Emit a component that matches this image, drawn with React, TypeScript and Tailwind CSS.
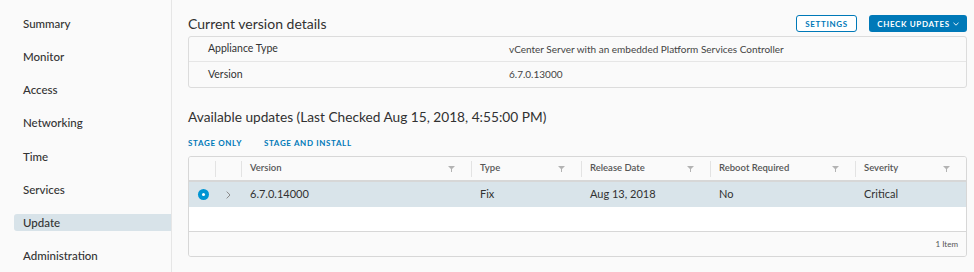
import React from "react";

const NAV = ["Summary", "Monitor", "Access", "Networking", "Time", "Services", "Update", "Administration"];

const COLS = [
  { key: "version", label: "Version" },
  { key: "type", label: "Type" },
  { key: "date", label: "Release Date" },
  { key: "reboot", label: "Reboot Required" },
  { key: "severity", label: "Severity" },
];

const ROW = { version: "6.7.0.14000", type: "Fix", date: "Aug 13, 2018", reboot: "No", severity: "Critical" } as Record<string, string>;

function Funnel() {
  return (
    <svg width="7" height="6" viewBox="0 0 7 6" className="shrink-0">
      <path d="M0 0h7L4 3v3H3V3z" fill="#b3b3b3" />
    </svg>
  );
}

export default function App() {
  return (
    <div className="w-[974px] h-[272px] flex bg-[#fafafa] text-[#313131] overflow-hidden" style={{ fontFamily: "Lato, 'Open Sans', sans-serif" }}>
      {/* Sidebar */}
      <aside className="w-[172px] shrink-0 border-r border-[#e6e6e6] pl-[14px] pt-[15px] flex flex-col gap-[16.2px]">
        {NAV.map((item) => (
          <div
            key={item}
            className={`h-[17px] flex items-center pl-[9px] text-[11.5px] font-medium text-[#333] ${item === "Update" ? "bg-[#d8e3e9] rounded-l-[3px]" : ""}`}
          >
            {item}
          </div>
        ))}
      </aside>

      {/* Main */}
      <main className="flex-1 pl-[16px] pr-[7px] pt-[15px]">
        <div className="flex items-center justify-between h-[17px]">
          <h2 className="text-[14px] text-[#313131]">Current version details</h2>
          <div className="flex items-center gap-[12px]">
            <button className="h-[17px] w-[61px] border border-[#0079b8] bg-white rounded-[3px] text-[8px] font-bold tracking-[0.08em] text-[#0079b8]">
              SETTINGS
            </button>
            <button className="h-[17px] w-[98px] bg-[#0079b8] rounded-[3px] text-[8px] font-bold tracking-[0.08em] text-white flex items-center justify-center gap-[3px]">
              CHECK UPDATES
              <svg width="6" height="4" viewBox="0 0 6 4">
                <path d="M0.5 0.8L3 3.2L5.5 0.8" stroke="white" strokeWidth="0.9" fill="none" />
              </svg>
            </button>
          </div>
        </div>

        <div className="mt-[4px] border border-[#dcdcdc] rounded-[3px] text-[10.5px]">
          <div className="h-[25px] grid grid-cols-[320px_1fr] items-center border-b border-[#e6e6e6]">
            <span className="pl-[19px] text-[#333]">Appliance Type</span>
            <span className="text-[10px] text-[#444]">vCenter Server with an embedded Platform Services Controller</span>
          </div>
          <div className="h-[25px] grid grid-cols-[320px_1fr] items-center">
            <span className="pl-[19px] text-[#333]">Version</span>
            <span className="text-[10px] text-[#444]">6.7.0.13000</span>
          </div>
        </div>

        <h2 className="mt-[20px] text-[13.7px] leading-[17px] text-[#313131]">
          Available updates (Last Checked Aug 15, 2018, 4:55:00 PM)
        </h2>

        <div className="mt-[13px] flex gap-[22px] text-[8px] font-bold tracking-[0.08em] text-[#0079b8] leading-[10px]">
          <span>STAGE ONLY</span>
          <span>STAGE AND INSTALL</span>
        </div>

        {/* Datagrid */}
        <div className="mt-[8px] border border-[#d7d7d7] rounded-[3px] overflow-hidden">
          <div className="grid grid-cols-[26px_26px_230px_110px_129px_145px_1fr] h-[25px] border-b-2 border-[#d7d7d7] bg-[#fafafa]">
            <div />
            <div className="flex items-center">
              <div className="w-px h-[16px] bg-[#e3e3e3]" />
            </div>
            {COLS.map((c) => (
              <div key={c.key} className="flex items-center">
                <div className="w-px h-[16px] bg-[#e3e3e3]" />
                <span className="pl-[8px] flex-1 text-[9.5px] font-semibold text-[#565656]">{c.label}</span>
                <span className="pr-[16px]">
                  <Funnel />
                </span>
              </div>
            ))}
          </div>

          <div className="grid grid-cols-[26px_26px_230px_110px_129px_145px_1fr] h-[25px] bg-[#d9e4ea] items-center text-[11px] text-[#313131]">
            <div className="flex justify-center pl-[2px]">
              <div className="w-[11px] h-[11px] rounded-full bg-[#0095d3] flex items-center justify-center">
                <div className="w-[3px] h-[3px] rounded-full bg-white" />
              </div>
            </div>
            <div className="flex justify-center">
              <svg width="5" height="8" viewBox="0 0 5 8">
                <path d="M0.7 0.6L4 4L0.7 7.4" stroke="#8a8a8a" strokeWidth="1" fill="none" />
              </svg>
            </div>
            {COLS.map((c) => (
              <div key={c.key} className="pl-[9px]">
                {ROW[c.key]}
              </div>
            ))}
          </div>

          <div className="h-[25px] bg-white border-b border-[#d7d7d7]" />

          <div className="h-[24px] flex items-center justify-end pr-[8px] text-[8px] text-[#565656] bg-[#fafafa]">
            1 Item
          </div>
        </div>
      </main>
    </div>
  );
}
